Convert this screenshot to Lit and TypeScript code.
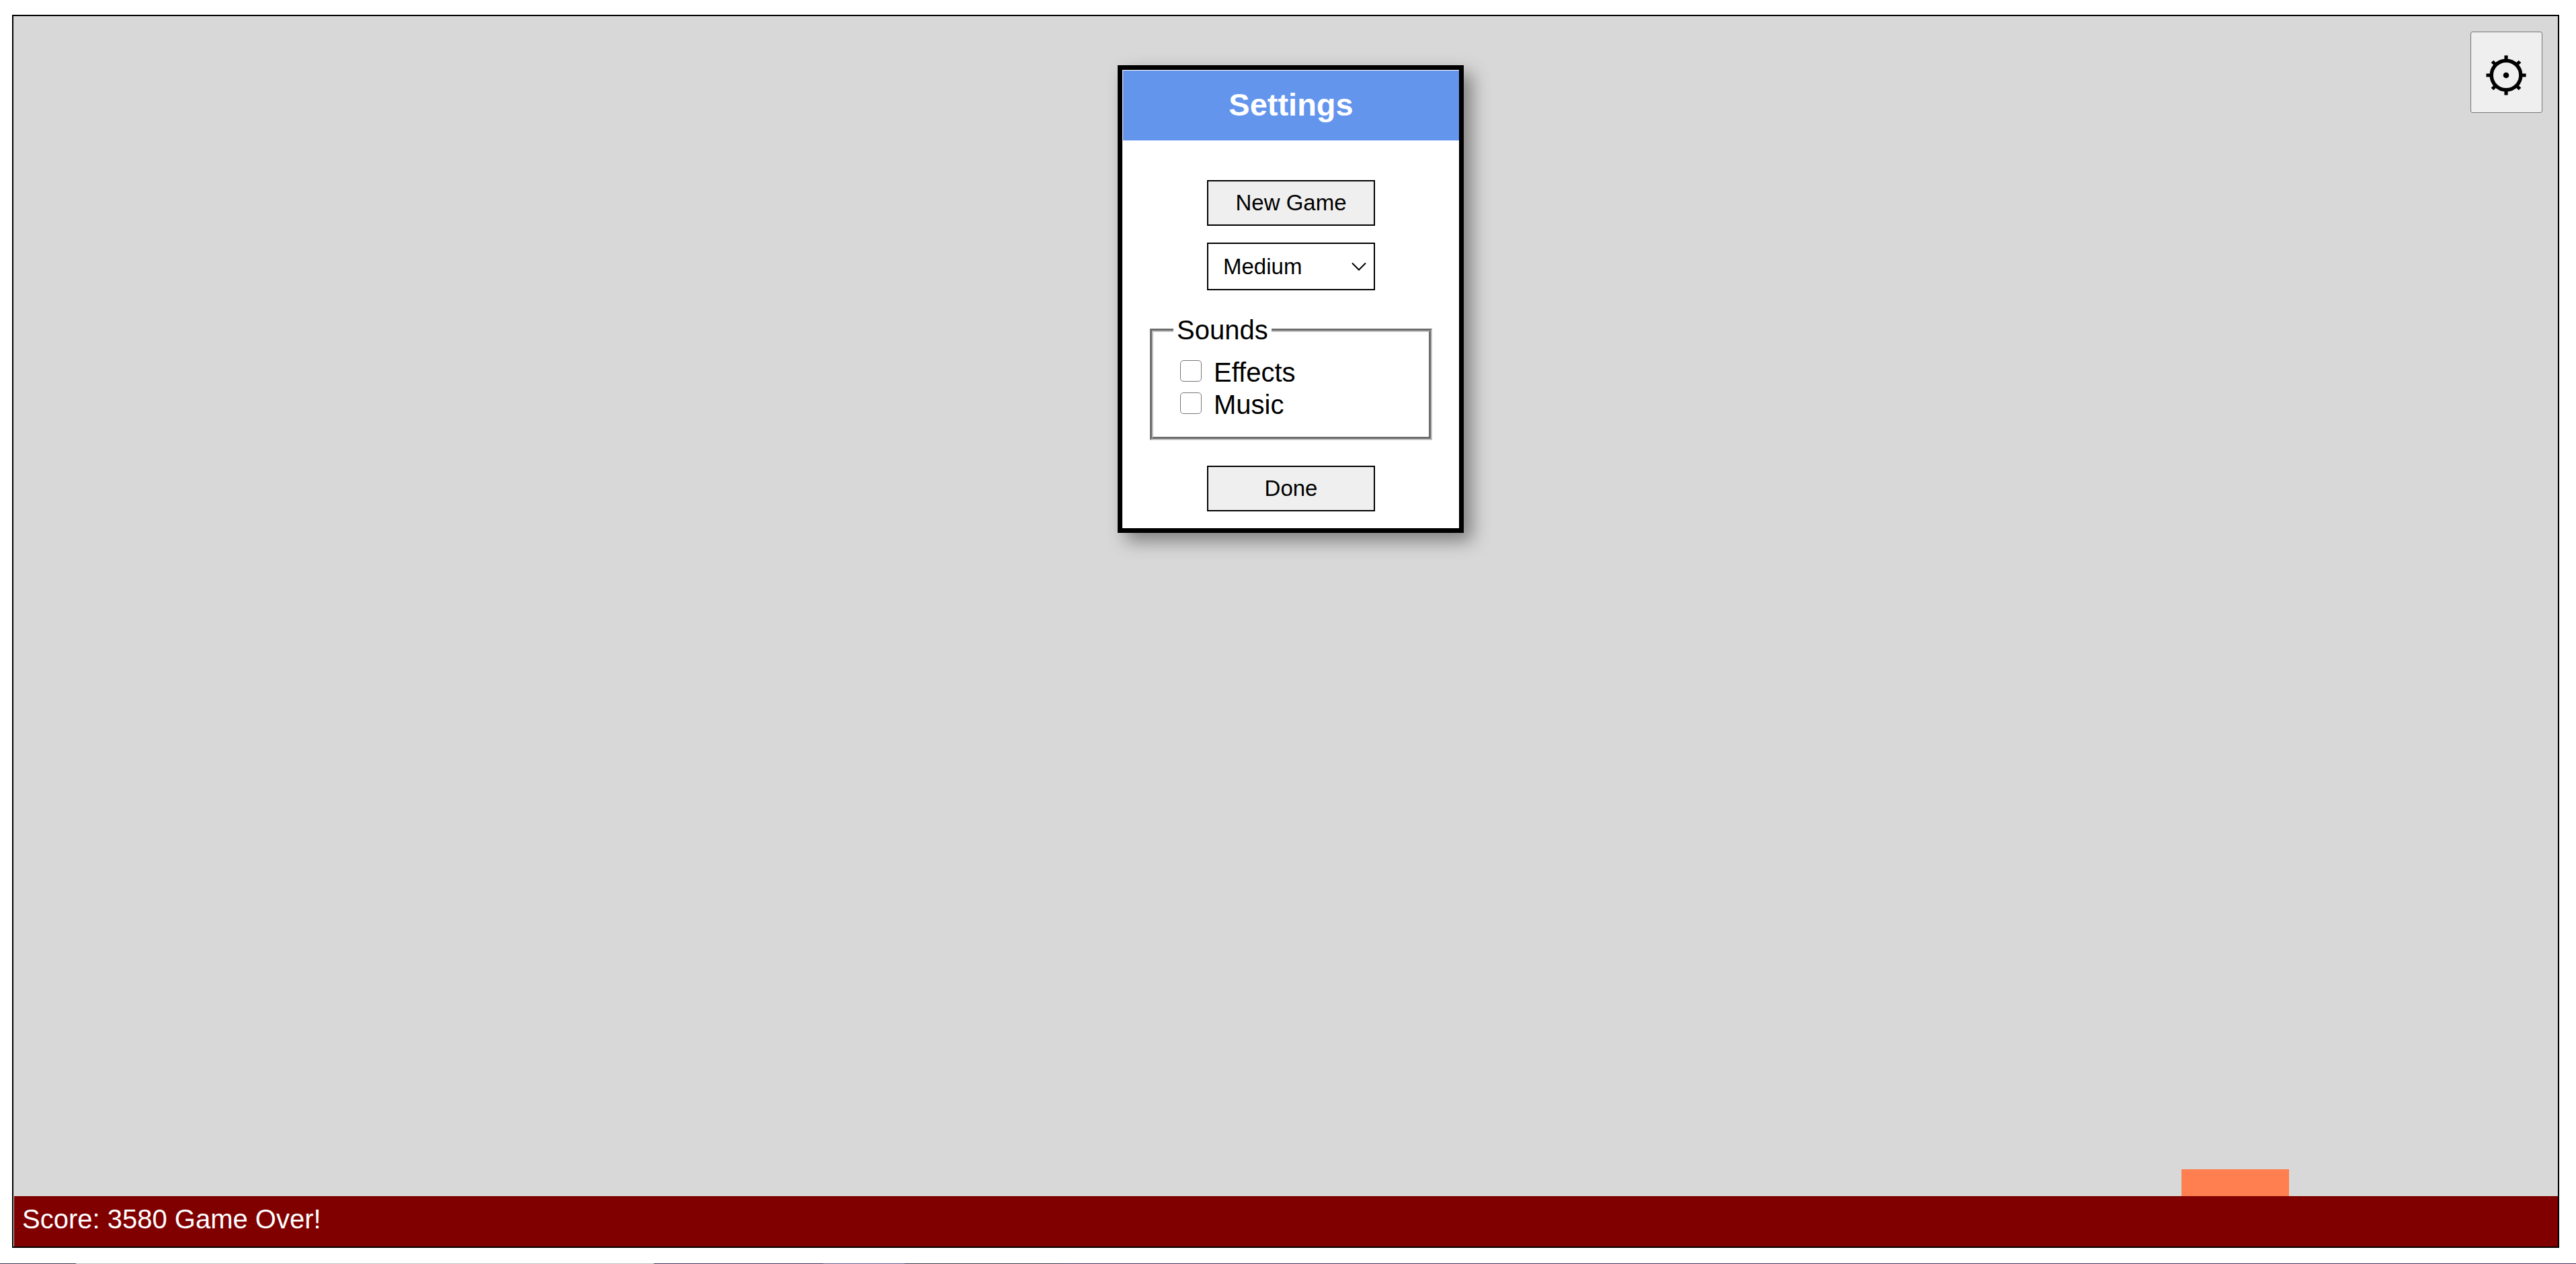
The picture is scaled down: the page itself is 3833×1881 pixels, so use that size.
import { LitElement, html, css } from "lit";
import { customElement, property, state } from "lit/decorators.js";

@customElement("settings-dialog")
export class SettingsDialog extends LitElement {
  static styles = css`
    :host {
      display: block;
      box-sizing: border-box;
      width: 515px;
      padding: 1px 0 25px 1px;
      border: 7px solid #000;
      background: #fff;
      color: #000;
      box-shadow: 12px 12px 25px #808080;
    }
    .title {
      margin: 0;
      padding: 24px 0 26px;
      background: cornflowerblue;
      color: #fff;
      font-size: 47px;
      line-height: 54px;
      text-align: center;
    }
    .body {
      display: flex;
      flex-direction: column;
      align-items: center;
      padding-top: 59px;
    }
    .control {
      box-sizing: border-box;
      width: 250px;
      border: 2px solid #000;
      border-radius: 0;
      font: inherit;
      font-size: 33px;
      line-height: 38px;
      color: #000;
    }
    .button {
      height: 68px;
      padding: 0;
      background: #efefef;
    }
    .picker {
      display: grid;
      align-items: center;
      margin: 25px 0 36px;
    }
    .picker > * {
      grid-area: 1 / 1;
    }
    .select {
      height: 71px;
      padding: 0 22px;
      appearance: none;
      background: #fff;
    }
    .chevron {
      justify-self: end;
      margin-right: 13px;
      pointer-events: none;
    }
    .sounds {
      box-sizing: border-box;
      width: 420px;
      margin: 0 0 38px;
      padding: 16px 30px 24px 40px;
      border: 5px groove #c0c0c0;
    }
    .legend {
      margin-left: -10px;
      padding: 0 5px;
      line-height: 46px;
    }
    .option {
      display: flex;
      align-items: center;
      gap: 18px;
      line-height: 48px;
    }
    .check {
      box-sizing: border-box;
      width: 32px;
      height: 32px;
      margin: 0 0 4px;
      appearance: none;
      border: 1px solid #767676;
      border-radius: 5px;
      background: #fff;
    }
    .check:checked {
      background: #0075ff;
    }
  `;

  @property() level = "Medium";

  private close() {
    this.dispatchEvent(new CustomEvent("done"));
  }

  render() {
    return html`
      <h3 class="title">Settings</h3>
      <div class="body">
        <button class="control button" type="button">New Game</button>
        <div class="picker">
          <select class="control select" aria-label="Difficulty">
            ${["Easy", "Medium", "Hard"].map(
              (name) => html`<option ?selected=${name === this.level}>${name}</option>`
            )}
          </select>
          <svg class="chevron" width="22" height="14" viewBox="0 0 22 14" aria-hidden="true">
            <path d="M1 1.5L11 11.5L21 1.5" fill="none" stroke="#000" stroke-width="2" />
          </svg>
        </div>
        <fieldset class="sounds">
          <legend class="legend">Sounds</legend>
          <div class="option">
            <input class="check" id="effects" type="checkbox" />
            <label for="effects">Effects</label>
          </div>
          <div class="option">
            <input class="check" id="music" type="checkbox" />
            <label for="music">Music</label>
          </div>
        </fieldset>
        <button class="control button" type="button" @click=${this.close}>Done</button>
      </div>
    `;
  }
}

@customElement("app-root")
export class AppRoot extends LitElement {
  static styles = css`
    :host {
      display: flex;
      flex-direction: column;
      box-sizing: border-box;
      height: 100vh;
      background: #fff;
      font-family: "Liberation Sans", Arial, sans-serif;
      font-size: 40px;
    }
    .game {
      flex: 1;
      display: flex;
      flex-direction: column;
      margin: 22px 25px 23px 18px;
      border: 2px solid #000;
      background: #d8d8d8;
    }
    .field {
      position: relative;
      flex: 1;
      display: grid;
      grid-template-columns: 1fr auto 1fr;
      align-items: start;
    }
    .dialog {
      grid-column: 2;
      margin-top: 73px;
      margin-left: 15px;
    }
    .gear {
      grid-column: 3;
      justify-self: end;
      box-sizing: border-box;
      width: 107px;
      height: 121px;
      margin: 23px 23px 0 0;
      padding: 9px 1px 0 0;
      border: 1px solid #767676;
      border-radius: 3px;
      background: #efefef;
    }
    .icon {
      display: block;
      margin: 0 auto;
    }
    .paddle {
      position: absolute;
      bottom: 0;
      width: 160px;
      height: 40px;
      background: coral;
    }
    .score {
      box-sizing: border-box;
      height: 75px;
      margin-left: 1px;
      padding: 11px 12px;
      background: maroon;
      color: #fff;
      line-height: 46px;
    }
    .edge {
      display: flex;
      height: 1px;
    }
    .s1 { flex: 113; background: #3a3852; }
    .s2 { flex: 860; background: #c0c0c0; }
    .s3 { flex: 252; background: #44305f; }
    .s4 { flex: 121; background: #6c5b95; }
    .s5 { flex: 234; background: #3a3648; }
    .s6 { flex: 2253; background: #45325f; }
  `;

  @property({ type: Number }) score = 3580;
  @property({ type: Number }) paddle = 3226;
  @state() private open = true;

  render() {
    return html`
      <main class="game">
        <div class="field">
          ${this.open
            ? html`<settings-dialog
                class="dialog"
                role="dialog"
                aria-label="Settings"
                @done=${() => (this.open = false)}
              ></settings-dialog>`
            : null}
          <button class="gear" type="button" aria-label="Settings" @click=${() => (this.open = true)}>
            <svg class="icon" width="60" height="60" viewBox="-30 -30 60 60" aria-hidden="true">
              <circle r="21.8" fill="none" stroke="#000" stroke-width="5.4" />
              <circle r="4.3" />
              <path
                d="M0-29.6V-23M0 29.6V23M-29.6 0H-23M29.6 0H23M-20.5-20.5L-16-16M20.5-20.5L16-16M-20.5 20.5L-16 16M20.5 20.5L16 16"
                stroke="#000"
                stroke-width="5.2"
              />
            </svg>
          </button>
          <div class="paddle" style="left:${this.paddle}px"></div>
        </div>
        <div class="score">Score: ${this.score} Game Over!</div>
      </main>
      <div class="edge">
        <span class="s1"></span><span class="s2"></span><span class="s3"></span><span class="s4"></span><span class="s5"></span><span class="s6"></span>
      </div>
    `;
  }
}
